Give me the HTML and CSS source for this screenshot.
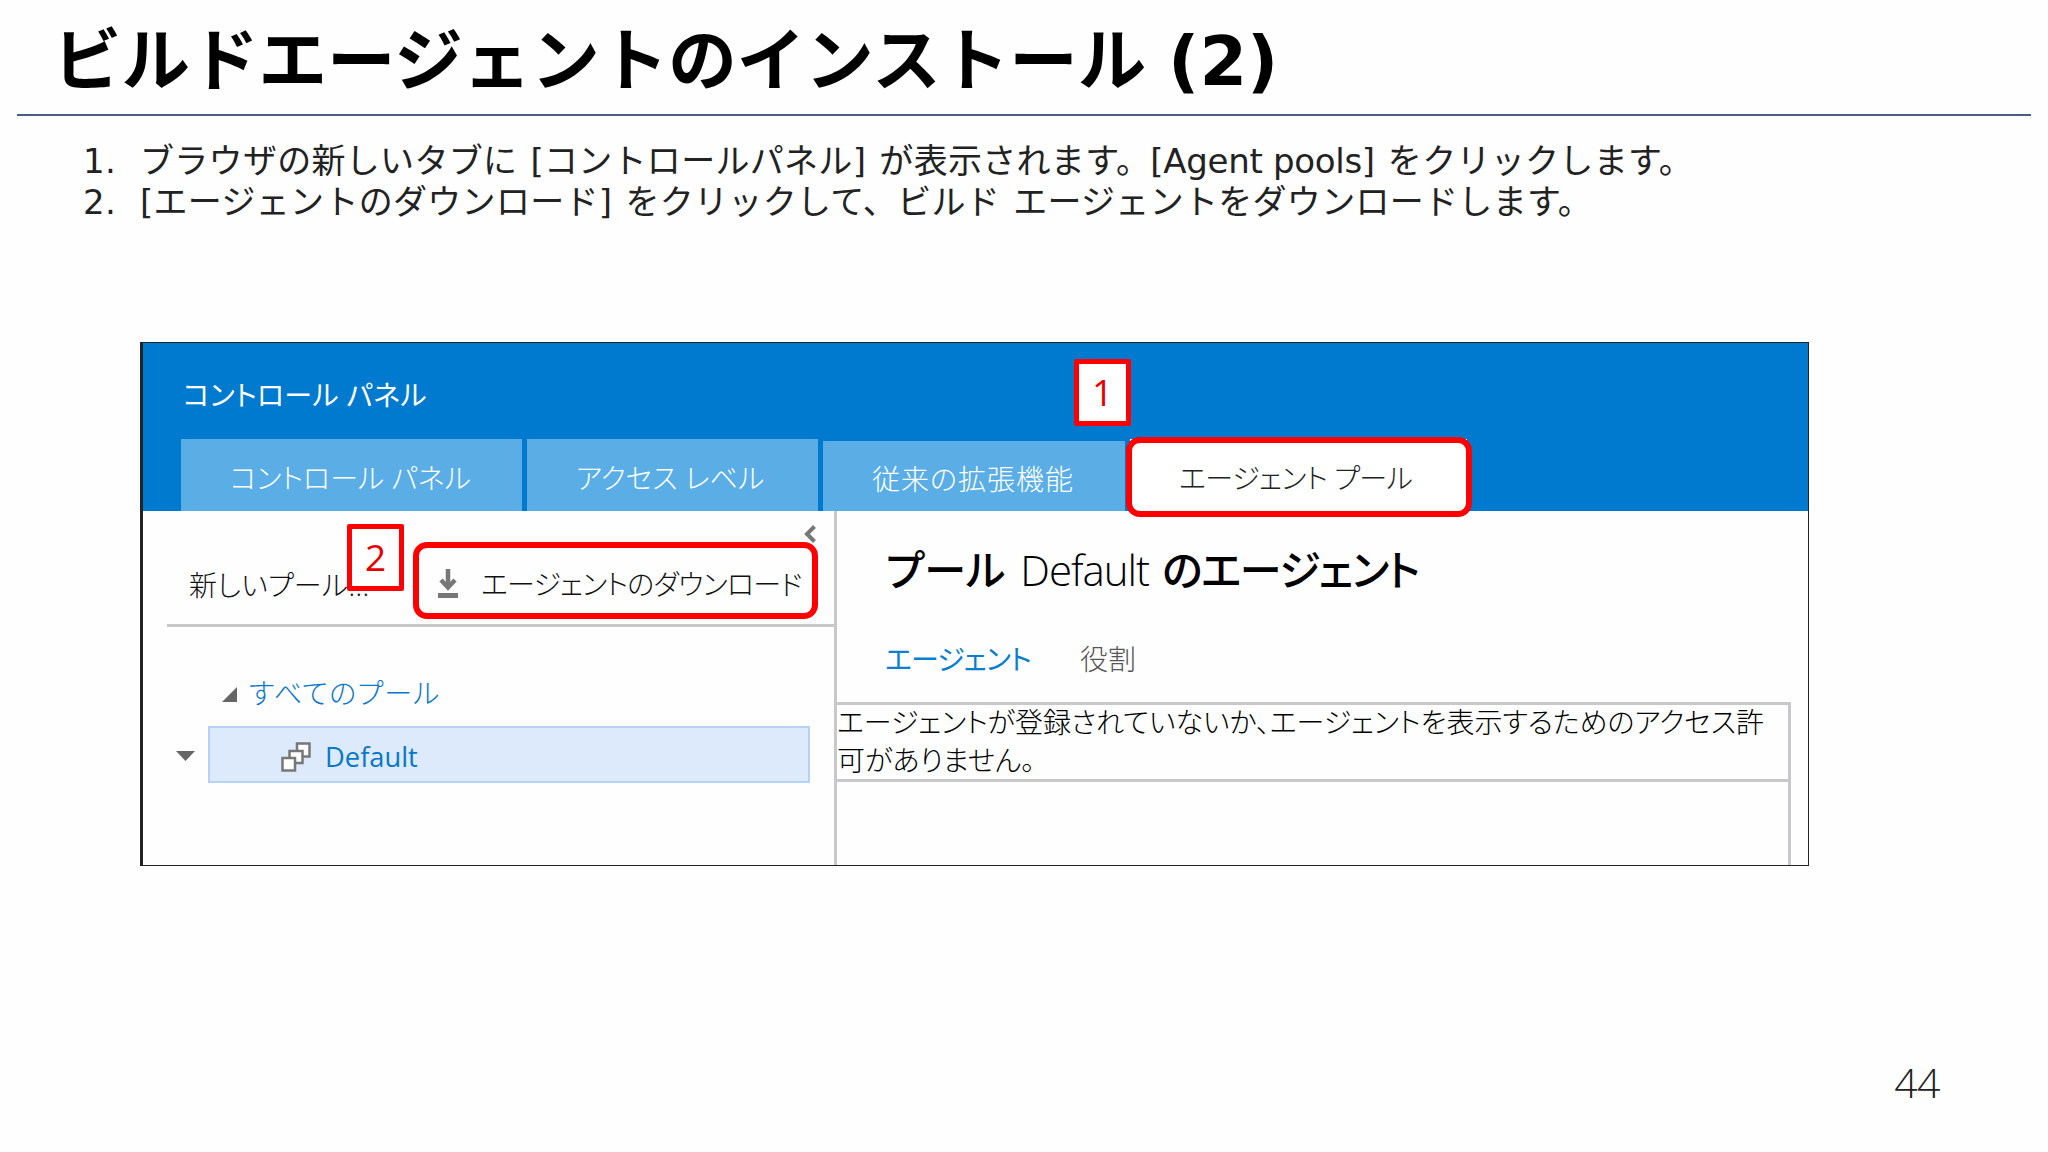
FILE: index.html
```html
<!DOCTYPE html>
<html lang="ja">
<head>
    <meta charset="UTF-8">
    <meta name="viewport" content="width=device-width, initial-scale=1.0">
    <title>ビルドエージェントのインストール (2)</title>
    <link rel="stylesheet" href="styles.css">
</head>
<body>
    <div class="slide">
        <header class="slide-header">
            <h1>ビルドエージェントのインストール (2)</h1>
        </header>

        <!-- 手順 -->
        <ol class="steps">
            <li><span class="num">1.</span>ブラウザの新しいタブに [コントロールパネル] が表示されます。<span class="latin">[Agent pools]</span> をクリックします。</li>
            <li><span class="num">2.</span>[エージェントのダウンロード] をクリックして、ビルド エージェントをダウンロードします。</li>
        </ol>

        <!-- コントロール パネル画面 -->
        <div class="panel">
            <div class="panel-header">
                <div class="panel-title">コントロール パネル</div>
                <nav class="tabs">
                    <a class="tab tab-control">コントロール パネル</a>
                    <a class="tab tab-access">アクセス レベル</a>
                    <a class="tab tab-extension">従来の拡張機能</a>
                    <a class="tab tab-agent active">エージェント プール</a>
                </nav>
            </div>

            <div class="panel-body">
                <aside class="sidebar">
                    <div class="toolbar">
                        <span class="new-pool">新しいプール...</span>
                        <svg class="icon-download" width="20" height="30" viewBox="0 0 20 30">
                            <path d="M10 0V18M3 11L10 18.500L17 11" fill="none" stroke="#777" stroke-width="4.500"/>
                            <rect x="0" y="24" width="20" height="5" fill="#777"/>
                        </svg>
                        <span class="download">エージェントのダウンロード</span>
                    </div>
                    <div class="tree-root">
                        <svg class="icon-expand" width="15" height="15" viewBox="0 0 15 15"><path d="M15 0V15H0Z" fill="#666"/></svg>
                        <span class="root-name">すべてのプール</span>
                    </div>
                    <div class="tree-row">
                        <svg class="icon-menu" width="19" height="10" viewBox="0 0 19 10"><path d="M0 0H19L9.500 10Z" fill="#666"/></svg>
                        <div class="tree-item">
                            <svg class="icon-pool" width="30" height="30" viewBox="0 0 30 30" fill="#fff" stroke="#777" stroke-width="2.500">
                                <rect x="16" y="1.500" width="12.500" height="13"/>
                                <rect x="8.500" y="9" width="13" height="12"/>
                                <rect x="1.500" y="16" width="12.500" height="12.500"/>
                            </svg>
                            <span class="item-name">Default</span>
                        </div>
                    </div>
                    <svg class="icon-collapse" width="12" height="18" viewBox="0 0 12 18"><path d="M10.500 1.500L3 9L10.500 16.500" fill="none" stroke="#777" stroke-width="4"/></svg>
                </aside>

                <main class="content">
                    <h2>プール <span class="pool-name">Default</span> <span class="suffix">のエージェント</span></h2>
                    <div class="sub-tabs">
                        <span class="current">エージェント</span>
                        <span class="role">役割</span>
                    </div>
                    <div class="grid">
                        <p class="message">エージェントが登録されていないか、エージェントを表示するためのアクセス許<br>可がありません。</p>
                    </div>
                </main>
            </div>

            <!-- 赤枠と番号 -->
            <div class="frame frame-agent"></div>
            <div class="frame frame-download"></div>
            <div class="callout callout-1">1</div>
            <div class="callout callout-2">2</div>
        </div>

        <footer class="page-number">44</footer>
    </div>
</body>
</html>
```

FILE: styles.css
```css
* {
    box-sizing: border-box;
    margin: 0;
    padding: 0;
}

body {
    font-family: "DejaVu Sans", "Noto Sans CJK JP", sans-serif;
    background: #fefefe;
    color: #000;
}

.slide {
    width: 2048px;
    height: 1152px;
    overflow: hidden;
    display: flex;
    flex-direction: column;
}

.slide-header {
    height: 116px;
    margin: 0 17px;
    padding-left: 36px;
    border-bottom: 2px solid #46617f;
}

h1 {
    font-size: 68.5px;
    font-weight: 700;
    line-height: 123px;
    word-spacing: -2px;
    white-space: nowrap;
}

/* 手順 */
.steps {
    list-style: none;
    height: 226px;
    padding: 25px 0 0 83px;
    font-size: 34px;
    line-height: 41px;
    letter-spacing: 0.3px;
    word-spacing: 2px;
    color: #222;
    white-space: nowrap;
}

.num {
    display: inline-block;
    width: 57px;
}

.latin {
    letter-spacing: -0.3px;
    word-spacing: 0;
}

/* コントロール パネル画面 */
.panel {
    position: relative;
    width: 1669px;
    height: 524px;
    margin-left: 140px;
    border: 1px solid #222;
    border-left-width: 3px;
    background: #fefefe;
    display: flex;
    flex-direction: column;
    font-family: "Open Sans", "Noto Sans CJK JP", sans-serif;
    font-size: 28px;
    font-weight: 300;
    font-feature-settings: "palt";
    white-space: nowrap;
}

.panel-header {
    height: 168px;
    padding-left: 38px;
    background: #007acf;
    color: #fff;
    display: flex;
    flex-direction: column;
    justify-content: space-between;
}

.panel-title {
    padding: 32px 0 0 2px;
    font-weight: 400;
    line-height: 40px;
    letter-spacing: 0.3px;
}

.tabs {
    display: flex;
    align-items: flex-end;
    gap: 5px;
}

.tab {
    height: 72px;
    padding-left: 49px;
    line-height: 79px;
    background: #5baee5;
}

.tab-control { width: 341px; }
.tab-access { width: 291px; }
.tab-extension { width: 302px; height: 70px; line-height: 76px; letter-spacing: 1px; }
.tab-agent { width: 337px; letter-spacing: -0.4px; }

.tab.active {
    background: #fff;
    color: #222;
}

.panel-body {
    flex: 1;
    display: flex;
}

.sidebar {
    position: relative;
    width: 694px;
    border-right: 3px solid #c8c8cb;
}

.toolbar {
    height: 116px;
    margin-left: 24px;
    padding: 32px 0 0 22px;
    border-bottom: 3px solid #c8c8cb;
    display: flex;
    align-items: center;
    color: #111;
}

.new-pool {
    width: 249px;
    letter-spacing: 0.3px;
}

.icon-download { margin-right: 23px; }

.download {
    letter-spacing: -0.75px;
    padding-bottom: 1px;
}

.tree-root {
    display: flex;
    align-items: center;
    height: 54px;
    margin-top: 40px;
    padding-left: 79px;
    color: #0a78c8;
}

.icon-expand { margin-right: 12px; }

.root-name {
    padding-bottom: 4px;
    letter-spacing: 1.2px;
}

.tree-row {
    display: flex;
    align-items: center;
    margin-top: 5px;
    padding-left: 33px;
}

.icon-menu { margin-top: 3px; }

.tree-item {
    width: 602px;
    height: 57px;
    margin-left: 13px;
    padding: 4px 0 0 71px;
    border: 2px solid #b6d3f6;
    background: #dceafb;
    display: flex;
    align-items: center;
    font-size: 27.3px;
    font-weight: 400;
    color: #0a78c8;
}

.icon-pool { margin-right: 14px; }

.icon-collapse {
    position: absolute;
    left: 661px;
    top: 14px;
}

.content {
    flex: 1;
    display: flex;
    flex-direction: column;
}

h2 {
    height: 128px;
    padding: 29px 0 0 49px;
    font-size: 42px;
    font-weight: 500;
    line-height: 60px;
}

.pool-name {
    margin: 0 2px 0 4px;
    font-weight: 300;
    letter-spacing: -1px;
}

.suffix { letter-spacing: -1.4px; }

.sub-tabs {
    display: flex;
    height: 63px;
    padding-left: 48px;
    line-height: 40px;
    color: #555;
}

.current {
    width: 195px;
    font-weight: 400;
    letter-spacing: -0.8px;
    color: #0a7fd0;
}

.grid {
    flex: 1;
    width: 954px;
    border-top: 3px solid #c8c8cb;
    border-right: 3px solid #c8c8cb;
}

.message {
    height: 79px;
    margin-top: -2px;
    border-bottom: 3px solid #c8c8cb;
    line-height: 38px;
    color: #000;
}

/* 赤枠と番号 */
.frame {
    position: absolute;
    border: 6px solid #f00;
    border-radius: 14px;
}

.frame-agent { left: 983px; top: 94px; width: 346px; height: 80px; }
.frame-download { left: 270px; top: 199px; width: 405px; height: 77px; }

.callout {
    position: absolute;
    width: 57px;
    height: 67px;
    border: 5px solid #f00;
    border-radius: 2px;
    background: #fff;
    color: #e80000;
    font-size: 37px;
    font-weight: 400;
    line-height: 56px;
    text-align: center;
}

.callout-1 { left: 931px; top: 16px; }
.callout-2 { left: 204px; top: 181px; }

.page-number {
    margin-top: auto;
    padding: 0 108px 40px 0;
    text-align: right;
    font-family: "Open Sans", sans-serif;
    font-size: 41px;
    font-weight: 300;
    line-height: 60px;
    letter-spacing: -0.5px;
    color: #222;
}
```
